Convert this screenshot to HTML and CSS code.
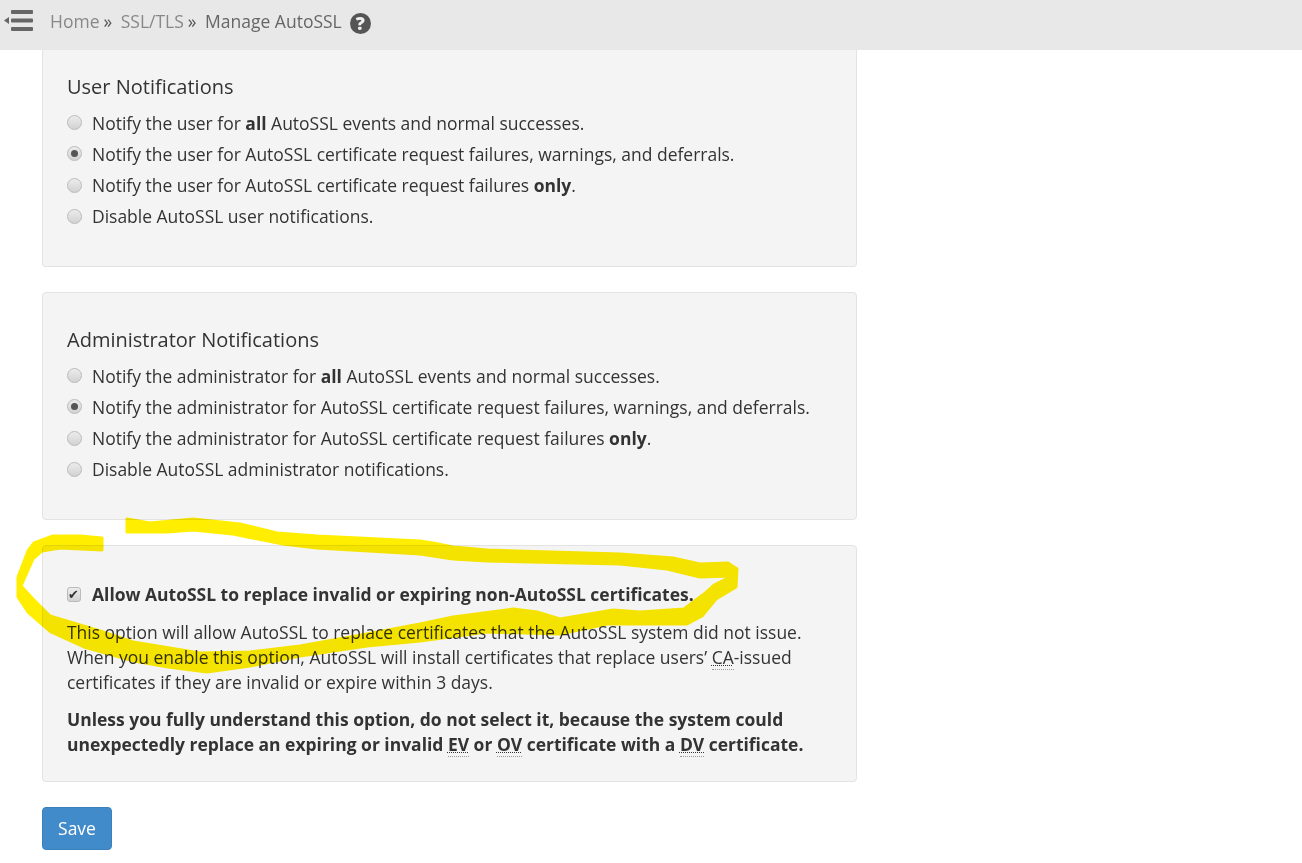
FILE: index.html
```html
<!DOCTYPE html>
<html lang="en">
<head>
  <meta charset="UTF-8">
  <title>Manage AutoSSL</title>
  <link rel="stylesheet" href="styles.css">
</head>
<body>

  <div class="topbar">
    <svg class="menu-icon" width="30" height="24" viewBox="0 0 30 24">
      <path d="M0 12.500 L5 9 V16 Z" fill="#666"/>
      <rect x="7" y="2" width="22" height="4" rx="1" fill="#666"/>
      <rect x="7" y="10.500" width="22" height="4" rx="1" fill="#666"/>
      <rect x="7" y="19" width="22" height="4" rx="1" fill="#666"/>
    </svg>
    <div class="crumbs">
      <a class="crumb">Home</a><span class="sep">»</span>
      <a class="crumb">SSL/TLS</a><span class="sep">»</span>
      <span class="crumb-current">Manage AutoSSL</span>
    </div>
    <span class="help">?</span>
  </div>

  <div class="content">
    <div class="panel panel-cut">
      <div class="panel-title">User Notifications</div>
      <label class="option"><input type="radio" name="user"><span>Notify the user for <b>all</b> AutoSSL events and normal successes.</span></label>
      <label class="option"><input type="radio" name="user" checked><span>Notify the user for AutoSSL certificate request failures, warnings, and deferrals.</span></label>
      <label class="option"><input type="radio" name="user"><span>Notify the user for AutoSSL certificate request failures <b>only</b>.</span></label>
      <label class="option"><input type="radio" name="user"><span>Disable AutoSSL user notifications.</span></label>
    </div>

    <div class="panel">
      <div class="panel-title">Administrator Notifications</div>
      <label class="option"><input type="radio" name="admin"><span>Notify the administrator for <b>all</b> AutoSSL events and normal successes.</span></label>
      <label class="option"><input type="radio" name="admin" checked><span>Notify the administrator for AutoSSL certificate request failures, warnings, and deferrals.</span></label>
      <label class="option"><input type="radio" name="admin"><span>Notify the administrator for AutoSSL certificate request failures <b>only</b>.</span></label>
      <label class="option"><input type="radio" name="admin"><span>Disable AutoSSL administrator notifications.</span></label>
    </div>

    <div class="panel panel-last">
      <label class="option option-check"><input type="checkbox" checked><b>Allow AutoSSL to replace invalid or expiring non-AutoSSL certificates.</b></label>
      <p class="note">This option will allow AutoSSL to replace certificates that the AutoSSL system did not issue. When you enable this option, AutoSSL will install certificates that replace users’ <abbr>CA</abbr>-issued certificates if they are invalid or expire within 3 days.</p>
      <p class="note note-strong">Unless you fully understand this option, do not select it, because the system could unexpectedly replace an expiring or invalid <abbr>EV</abbr> or <abbr>OV</abbr> certificate with a <abbr>DV</abbr> certificate.</p>
    </div>

    <button class="save-btn">Save</button>
  </div>

  <!-- marker scribble drawn on top of the screenshot -->
  <svg class="scribble" width="1302" height="863" viewBox="0 0 1302 863">
    <path d="M102 538 L80 536 53 536 34 543 28 551 18 577 18 597 28 612 51 632 84 647 134 661 168 667 207 672 250 666 300 656 367 646 420 641 487 632 560 634 607 624 687 624 702 616 716 599 736 587 737 569 728 563 700 564 673 558 620 554 487 550 453 547 433 543 420 541 317 536 277 533 240 524 193 519 150 523 127 519 127 532 167 532 193 530 233 534 283 544 317 548 420 554 453 559 487 561 620 564 667 569 700 577 732 576 714 585 704 594 684 609 640 612 613 610 560 619 537 612 513 609 453 617 420 624 367 634 300 646 250 652 200 653 133 642 100 631 50 616 33 599 21 586 33 559 42 551 60 548 102 550 Z" fill="#ffee00" stroke="#ffee00" stroke-width="3" stroke-linejoin="round"/>
  </svg>

</body>
</html>
```

FILE: styles.css
```css
* { box-sizing: border-box; }

body {
  margin: 0;
  font-family: 'Open Sans', sans-serif;
  font-size: 17.480px;
  color: #333;
  background: #fff;
  position: relative;
  height: 863px;
  overflow: hidden;
}

.topbar {
  height: 50px;
  background: #e8e8e8;
  display: flex;
  align-items: center;
  padding-left: 4px;
  padding-bottom: 5px;
}

.menu-icon {
  margin: 0 16px 5px 0;
  flex: none;
}

.crumbs {
  font-size: 17.500px;
  margin-bottom: 3px;
}

.crumb {
  color: #888;
}

.crumb-current {
  color: #666;
}

.sep {
  color: #555;
  margin: 0 4px 0 4px;
}

.help {
  width: 21px;
  height: 21px;
  margin: 2px 0 0 8px;
  border-radius: 50%;
  background: #555;
  color: #f0f0f0;
  font-size: 18px;
  font-weight: 800;
  line-height: 21px;
  text-align: center;
}

.content {
  width: 857px;
  padding-left: 42px;
}

.panel {
  background: #f4f4f4;
  border: 1px solid #e3e3e3;
  border-radius: 4px;
  padding: 33px 24px 34px;
  margin-bottom: 25px;
  height: 228px;
}

.panel-cut {
  height: 217px;
  border-top: none;
  border-radius: 0 0 4px 4px;
  padding-top: 23px;
}

.panel-last {
  height: 237px;
  padding-top: 35px;
}

.panel-title {
  font-size: 20px;
  line-height: 28px;
  margin-bottom: 6.200px;
}

.option {
  display: flex;
  align-items: center;
  height: 31.200px;
}

.option input {
  appearance: none;
  flex: none;
  width: 15px;
  height: 15px;
  margin: 0 10px 0 0;
  border: 1px solid #bbb;
  background: linear-gradient(#ececec, #d2d2d2);
  position: relative;
}

.option input[type=radio] {
  border-radius: 50%;
}

.option input[type=radio]:checked::after {
  content: "";
  position: absolute;
  left: 3px;
  top: 3px;
  width: 7px;
  height: 7px;
  border-radius: 50%;
  background: #555;
}

.option input[type=checkbox] {
  width: 14px;
  height: 15px;
  margin-right: 11px;
  border-radius: 3px;
}

.option input[type=checkbox]:checked::after {
  content: "✔";
  position: absolute;
  left: 0;
  top: -2px;
  font-family: 'DejaVu Sans', sans-serif;
  font-size: 13px;
  line-height: 17px;
  color: #333;
}

.option-check {
  height: 26px;
  margin-bottom: 13px;
}

.note {
  margin: 0 0 12px;
  line-height: 25px;
}

.note-strong {
  font-weight: bold;
}

abbr {
  text-decoration: underline dotted 1px;
  text-underline-offset: 1px;
  border-bottom: 1px dotted #999;
}

.save-btn {
  display: block;
  width: 70px;
  height: 43px;
  padding: 0 0 2px;
  font: 17.500px 'Open Sans', sans-serif;
  color: #fff;
  background: #428bca;
  border: 1px solid #3a80bd;
  border-radius: 4px;
}

.scribble {
  position: absolute;
  left: 0;
  top: 0;
  mix-blend-mode: multiply;
  pointer-events: none;
}
```
